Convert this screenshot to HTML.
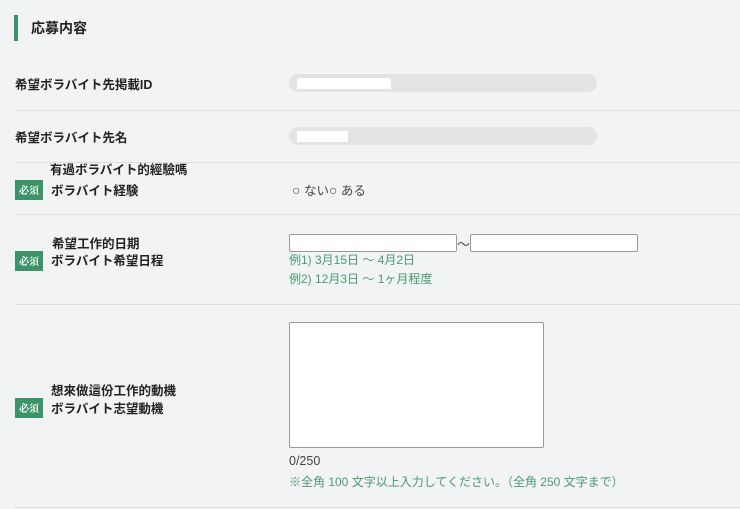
<!DOCTYPE html><html><head><meta charset="utf-8"><style>
body{margin:0;width:740px;height:509px;background:#f2f3f5;font-family:"Liberation Sans","Noto Sans CJK JP",sans-serif;position:relative;overflow:hidden;color:#222}
.a{position:absolute;white-space:nowrap}
.b{font-weight:bold;font-size:12.5px}
.line{position:absolute;left:15px;right:0;height:1px;background:#dcdde0}
.pill{position:absolute;left:289px;width:308px;height:18px;border-radius:9px;background:#e2e3e5}
.w{position:absolute;top:4px;left:8px;height:11px;background:#fff}
.badge{position:absolute;left:15px;width:28px;height:20px;background:#3b9468;color:#fff;font-size:10px;font-weight:bold;text-align:center;line-height:20px;font-family:"Noto Serif CJK SC",serif}
.g{color:#4a9a72;font-size:12px}
.inp{position:absolute;height:16px;background:#fff;border:1px solid #999;border-radius:2px}
</style></head><body>
<div class="a" style="left:14px;top:15px;width:4px;height:26px;background:#3b9468"></div>
<div class="a" style="left:31px;top:18px;font-weight:bold;font-size:14px">応募内容</div>
<div class="a b" style="left:15px;top:74px">希望ボラバイト先掲載ID</div>
<div class="pill" style="top:74px"><div class="w" style="width:94px"></div></div>
<div class="line" style="top:110px"></div>
<div class="a b" style="left:15px;top:127px">希望ボラバイト先名</div>
<div class="pill" style="top:127px"><div class="w" style="width:51px"></div></div>
<div class="line" style="top:162px"></div>
<div class="a b" style="left:50px;top:159px">有過ボラバイト的經驗嗎</div>
<div class="badge" style="top:180px">必須</div>
<div class="a b" style="left:51px;top:180px">ボラバイト経験</div>
<div class="a" style="left:292px;top:180px;font-size:12.5px;color:#444"><span style="font-size:14px">○</span> ない<span style="font-size:14px">○</span> ある</div>
<div class="line" style="top:214px"></div>
<div class="a b" style="left:52px;top:233px">希望工作的日期</div>
<div class="badge" style="top:251px">必須</div>
<div class="a b" style="left:51px;top:250px">ボラバイト希望日程</div>
<div class="inp" style="left:289px;top:234px;width:166px"></div>
<div class="a" style="left:457px;top:234px;font-size:13px;color:#555">～</div>
<div class="inp" style="left:470px;top:234px;width:166px"></div>
<div class="a g" style="left:289px;top:251px">例1) 3月15日 ～ 4月2日</div>
<div class="a g" style="left:289px;top:270px">例2) 12月3日 ～ 1ヶ月程度</div>
<div class="line" style="top:304px"></div>
<div class="a b" style="left:51px;top:380px">想來做這份工作的動機</div>
<div class="badge" style="top:398px">必須</div>
<div class="a b" style="left:51px;top:398px">ボラバイト志望動機</div>
<div class="inp" style="left:289px;top:322px;width:253px;height:124px"></div>
<div class="a" style="left:289px;top:454px;font-size:12.5px;color:#444">0/250</div>
<div class="a g" style="left:289px;top:473px">※全角 100 文字以上入力してください。（全角 250 文字まで）</div>
<div class="line" style="top:507px"></div>
</body></html>
